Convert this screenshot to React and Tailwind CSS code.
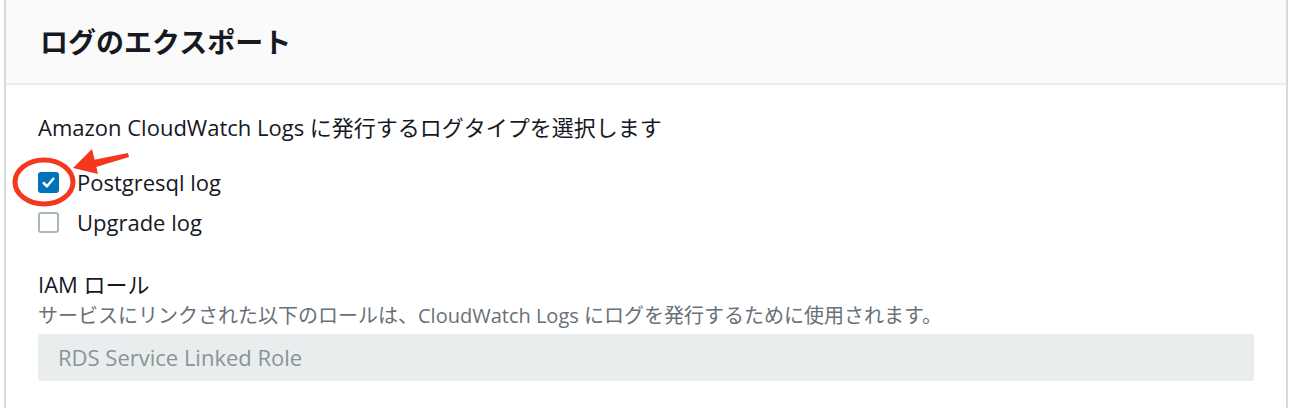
export default function App() {
  return (
    <div className="relative w-[1290px] h-[408px] bg-white overflow-hidden" style={{ fontFamily: '"Open Sans", "Noto Sans CJK JP", sans-serif' }}>
      <div className="ml-[4px] mr-[2px] h-full border-l-[2px] border-r-[2px] border-[#d5dbdb]">
        <div className="h-[85px] bg-[#fafafa] border-b-[2px] border-[#eaeded] flex items-center pl-[34px]">
          <h2 className="text-[28px] font-bold text-[#16191f]">ログのエクスポート</h2>
        </div>
        <div className="pl-[32px] pr-[32px] pt-[27px]">
          <p className="text-[22px] text-[#16191f] leading-[30px]">Amazon CloudWatch Logs に発行するログタイプを選択します</p>
          <div className="mt-[25px] flex flex-col gap-[10px]">
            <label className="flex items-center gap-[18px] h-[30px]">
              <span className="w-[21px] h-[21px] rounded-[3px] bg-[#0073bb] flex items-center justify-center">
                <svg width="15" height="15" viewBox="0 0 14 14" fill="none">
                  <path d="M2.5 7.5 L5.6 10.5 L11.5 3.5" stroke="white" strokeWidth="2.4" strokeLinecap="round" strokeLinejoin="round" />
                </svg>
              </span>
              <span className="text-[22px] text-[#16191f]">Postgresql log</span>
            </label>
            <label className="flex items-center gap-[18px] h-[30px]">
              <span className="w-[21px] h-[21px] rounded-[3px] border-[2px] border-[#aab7b8] bg-white" />
              <span className="text-[22px] text-[#16191f]">Upgrade log</span>
            </label>
          </div>
          <div className="mt-[32px]">
            <p className="text-[22px] text-[#16191f] leading-[30px]">IAM ロール</p>
            <p className="mt-[4px] text-[20px] text-[#687078] leading-[26px]">サービスにリンクされた以下のロールは、CloudWatch Logs にログを発行するために使用されます。</p>
            <div className="mt-[5px] h-[47px] rounded-[3px] bg-[#eaeded] flex items-center px-[20px] text-[22px] text-[#879596]">
              RDS Service Linked Role
            </div>
          </div>
        </div>
      </div>
      <svg className="absolute left-0 top-0 pointer-events-none" width="200" height="260" viewBox="0 0 200 260">
        <ellipse cx="44" cy="182" rx="29" ry="22" fill="none" stroke="#f5371d" strokeWidth="5" />
        <path d="M93 160 L128 153 L129 157 L96 167 Z" fill="#f5371d" />
        <path d="M73 168 L92 149 L98 174 Z" fill="#f5371d" />
      </svg>
    </div>
  );
}
